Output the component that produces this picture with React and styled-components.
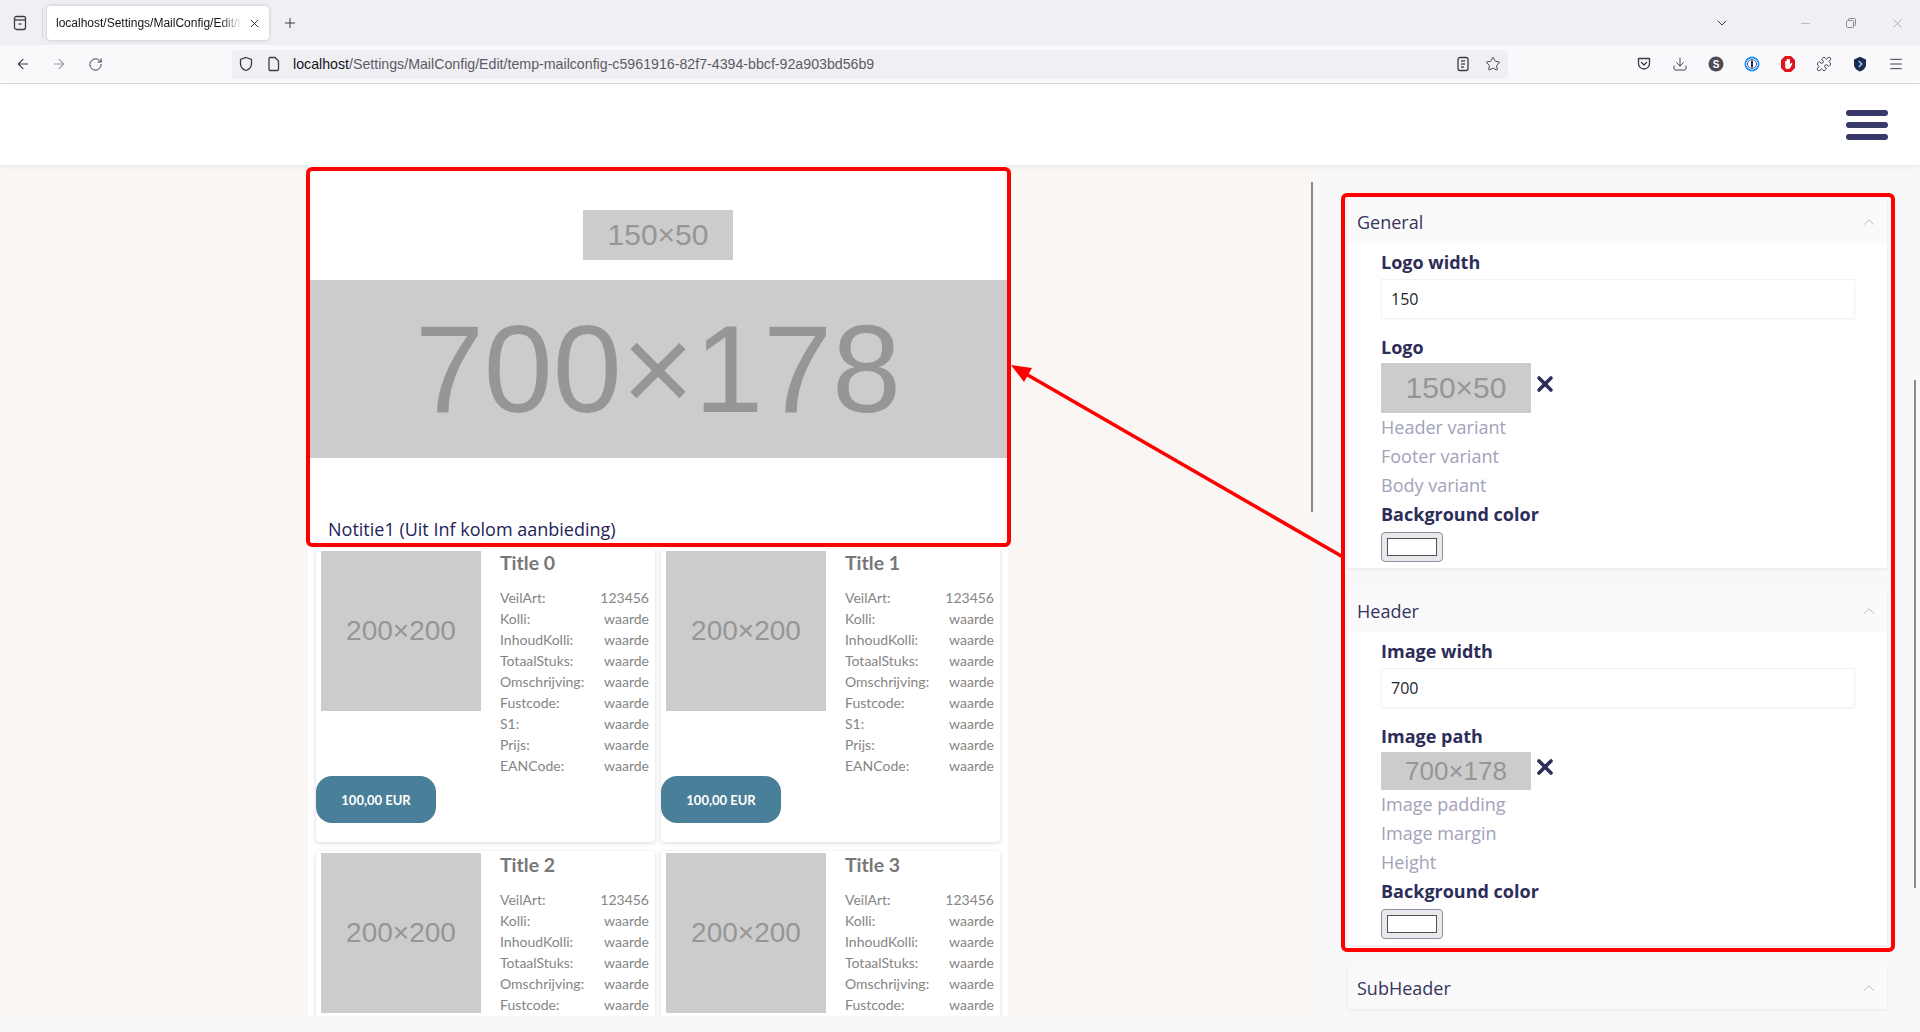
import React from "react";
import styled, { createGlobalStyle } from "styled-components";
import {
  ArrowLeft,
  ArrowRight,
  RotateCw,
  Plus,
  ChevronDown,
  ChevronUp,
  Minus,
  X,
  Star,
  Download,
  Puzzle,
  Menu,
} from "lucide-react";

const GlobalStyle = createGlobalStyle`
  html, body {
    margin: 0;
    padding: 0;
    overflow: hidden;
    background: #f8f8fa;
  }
  * {
    box-sizing: border-box;
  }
`;

const UI = `"Liberation Sans", Arial, sans-serif`;
const OPEN = `"Open Sans", "Noto Sans", sans-serif`;
const CARD = `Lato, "Open Sans", sans-serif`;
const PLACE = `"Liberation Sans", Arial, sans-serif`;

const rows = [
  ["VeilArt:", "123456"],
  ["Kolli:", "waarde"],
  ["InhoudKolli:", "waarde"],
  ["TotaalStuks:", "waarde"],
  ["Omschrijving:", "waarde"],
  ["Fustcode:", "waarde"],
  ["S1:", "waarde"],
  ["Prijs:", "waarde"],
  ["EANCode:", "waarde"],
];

/* ---------- browser chrome ---------- */

const TabStrip = styled.div`
  height: 45px;
  background: #f0f0f4;
  display: flex;
  align-items: center;
  padding-top: 1px;
  font-family: ${UI};
  color: #15141a;
`;

const IconBtn = styled.div`
  width: ${(p) => p.$w || 36}px;
  height: 32px;
  display: flex;
  align-items: center;
  justify-content: center;
  flex-shrink: 0;
  margin-left: ${(p) => p.$ml || 0}px;
  color: ${(p) => p.$color || "#3b3b45"};
`;

const Sep = styled.div`
  width: 1px;
  height: 30px;
  background: #d8d8de;
  margin: 0 2px 0 2px;
`;

const Tab = styled.div`
  width: 222px;
  height: 34px;
  margin-left: 2px;
  background: #fff;
  border-radius: 4px;
  box-shadow: 0 0 4px rgba(0, 0, 0, 0.18);
  display: flex;
  align-items: center;
  padding: 0 8px 0 9px;
  font-size: 12px;
  gap: 6px;
`;

const TabTitle = styled.span`
  flex: 1;
  white-space: nowrap;
  overflow: hidden;
  -webkit-mask-image: linear-gradient(to right, #000 88%, transparent);
`;

const Spacer = styled.div`
  flex: 1;
`;

const NavBar = styled.div`
  height: 39px;
  background: #f9f9fb;
  border-bottom: 1px solid #dcdce0;
  display: flex;
  align-items: center;
  padding: 0 6px 0 5px;
  font-family: ${UI};
`;

const UrlBar = styled.div`
  margin-left: 119px;
  width: 1276px;
  height: 29px;
  background: #f0f0f4;
  border-radius: 4px;
  display: flex;
  align-items: center;
  padding: 0 0 0 6px;
  font-size: 14.2px;
  color: #5b5b66;
`;

const UrlText = styled.span`
  margin-left: 5px;
  flex: 1;
  white-space: nowrap;
  b {
    font-weight: 400;
    color: #15141a;
  }
`;

/* ---------- page ---------- */

const Page = styled.div`
  height: 948px;
  display: flex;
  flex-direction: column;
`;

const TopHeader = styled.header`
  height: 81px;
  background: #fff;
  display: flex;
  align-items: center;
  justify-content: flex-end;
  padding-right: 32px;
  box-shadow: 0 2px 5px rgba(0, 0, 0, 0.05);
  position: relative;
  z-index: 2;
`;

const Burger = styled.div`
  width: 42px;
  display: flex;
  flex-direction: column;
  gap: 6px;
  span {
    height: 6px;
    border-radius: 3px;
    background: #38386a;
  }
`;

const Main = styled.div`
  flex: 1;
  display: flex;
  min-height: 0;
`;

const PreviewPane = styled.div`
  width: 1316px;
  height: 851px;
  background: #f9f6f3;
  overflow: hidden;
  position: relative;
`;

const PaneThumb = styled.div`
  position: absolute;
  right: ${(p) => p.$right}px;
  top: ${(p) => p.$top}px;
  height: ${(p) => p.$h}px;
  width: 2px;
  background: #8a8a8a;
`;

const Email = styled.div`
  width: 700px;
  margin: 0 auto;
  background: #fff;
  padding-top: 45px;
`;

const Placeholder = styled.div`
  width: ${(p) => p.$w}px;
  height: ${(p) => p.$h}px;
  background: #cccccc;
  color: #969696;
  font-family: ${PLACE};
  font-size: ${(p) => p.$fs}px;
  display: flex;
  align-items: center;
  justify-content: center;
  flex-shrink: 0;
  margin: ${(p) => (p.$center ? "0 auto" : "0")};
`;

const LogoWrap = styled.div`
  margin-bottom: 20px;
`;

const Note = styled.p`
  margin: 0;
  padding: 59px 20px 8px;
  font-family: ${OPEN};
  font-size: 18px;
  line-height: 24px;
  color: #23235a;
`;

const CardGrid = styled.div`
  display: grid;
  grid-template-columns: 1fr 1fr;
  gap: 9px 6px;
  padding: 0 8px 0 8px;
`;

const Card = styled.div`
  background: #fff;
  border-radius: 4px;
  box-shadow: 0 1px 4px rgba(0, 0, 0, 0.16);
  padding: 2px 0 19px 0;
  font-family: ${CARD};
`;

const CardTop = styled.div`
  display: flex;
  padding: 0 6px 0 5px;
`;

const CardInfo = styled.div`
  flex: 1;
  margin-left: 19px;
`;

const CardTitle = styled.h3`
  margin: 1px 0 13px;
  font-size: 19.5px;
  line-height: 22px;
  font-weight: 700;
  color: #777;
`;

const InfoGrid = styled.div`
  display: grid;
  grid-template-columns: auto auto;
  justify-content: space-between;
  font-size: 14px;
  line-height: 21px;
  color: #858585;
  span:nth-child(even) {
    text-align: right;
  }
`;

const PriceButton = styled.div`
  width: 120px;
  height: 47px;
  border-radius: 16px;
  background: #4a7f99;
  color: #fff;
  font-weight: 700;
  font-size: 13px;
  display: flex;
  align-items: center;
  justify-content: center;
`;

/* ---------- settings ---------- */

const SettingsPane = styled.div`
  flex: 1;
  padding: 35px 33px 0 32px;
  position: relative;
  font-family: ${OPEN};
`;

const Section = styled.section`
  background: #fff;
  box-shadow: 0 1px 3px rgba(0, 0, 0, 0.07);
  margin-bottom: 21px;
`;

const SectionHead = styled.div`
  height: 43px;
  background: #fafafa;
  display: flex;
  align-items: center;
  justify-content: space-between;
  padding: 0 9px 0 9px;
  font-size: 18px;
  color: #34345f;
`;

const SectionBody = styled.div`
  padding: 5px 32px 6px 33px;
`;

const Field = styled.div`
  margin-bottom: ${(p) => (p.$mb === undefined ? 14 : p.$mb)}px;
`;

const Label = styled.div`
  font-size: 18px;
  line-height: 29px;
  font-weight: 700;
  color: #2d2d5a;
  margin-bottom: ${(p) => p.$mb || 0}px;
`;

const TextInput = styled.input`
  display: block;
  width: 100%;
  height: 40px;
  border: 1px solid #f2f2f4;
  box-shadow: 0 1px 2px rgba(0, 0, 0, 0.03);
  background: #fff;
  padding: 0 9px;
  font-family: ${OPEN};
  font-size: 16px;
  color: #1e1e2e;
  outline: none;
`;

const ImageRow = styled.div`
  display: flex;
  align-items: center;
  gap: 2px;
  margin-top: 1px;
  svg {
    margin-bottom: 8px;
  }
`;

const Variant = styled.div`
  font-size: 18px;
  line-height: 29px;
  color: #a2a2b9;
`;

const ColorSwatch = styled.div`
  width: 62px;
  height: 30px;
  margin-top: 3px;
  border: 1px solid #8f8f9d;
  border-radius: 4px;
  background: #e9e9ed;
  padding: 5px 5px;
  div {
    height: 100%;
    background: #fff;
    border: 1px solid #505050;
  }
`;

const Overlay = styled.svg`
  position: absolute;
  left: 0;
  top: 0;
  pointer-events: none;
  z-index: 10;
`;

/* ---------- small drawn icons ---------- */

const ViewIcon = () => (
  <svg width="16" height="16" viewBox="0 0 16 16" fill="none" stroke="#3b3b45" strokeWidth="1.3">
    <rect x="2.5" y="1.5" width="11" height="13" rx="2" />
    <line x1="2.5" y1="5" x2="13.5" y2="5" />
    <line x1="6.5" y1="9" x2="9.5" y2="9" />
  </svg>
);

const RestoreIcon = () => (
  <svg width="12" height="12" viewBox="0 0 12 12" fill="none" stroke="#8a8a8a" strokeWidth="1">
    <rect x="1.5" y="3.5" width="7" height="7" rx="1" />
    <path d="M3.5 3.5V2.5a1 1 0 0 1 1-1h5a1 1 0 0 1 1 1v5a1 1 0 0 1-1 1h-1" />
  </svg>
);

const ShieldIcon = () => (
  <svg width="16" height="16" viewBox="0 0 16 16" fill="none" stroke="#3b3b45" strokeWidth="1.3">
    <path d="M8 1.5l5.5 2v4c0 3.5-2.5 6-5.5 7-3-1-5.5-3.5-5.5-7v-4z" />
  </svg>
);

const PageIcon = () => (
  <svg width="16" height="16" viewBox="0 0 16 16" fill="none" stroke="#3b3b45" strokeWidth="1.3">
    <path d="M4 1.5h5l3.5 3.5v8.5a1 1 0 0 1-1 1h-7.5a1 1 0 0 1-1-1v-11a1 1 0 0 1 1-1z" />
  </svg>
);

const ReaderIcon = () => (
  <svg width="16" height="16" viewBox="0 0 16 16" fill="none" stroke="#3b3b45" strokeWidth="1.3">
    <rect x="3" y="1.5" width="10" height="13" rx="2" />
    <line x1="6" y1="5" x2="10" y2="5" />
    <line x1="6" y1="8" x2="10" y2="8" />
    <line x1="6" y1="11" x2="9" y2="11" />
  </svg>
);

const PocketIcon = () => (
  <svg width="16" height="16" viewBox="0 0 16 16" fill="none" stroke="#3b3b45" strokeWidth="1.3">
    <path d="M2.5 2.5h11v5a5.5 5.5 0 0 1-11 0z" strokeLinejoin="round" />
    <path d="M5.5 6.5L8 9l2.5-2.5" strokeLinecap="round" />
  </svg>
);

const SIcon = () => (
  <svg width="16" height="16" viewBox="0 0 16 16">
    <circle cx="8" cy="8" r="7.5" fill="#4b4b52" />
    <text x="8" y="11.5" textAnchor="middle" fontSize="10" fontWeight="700" fill="#fff" fontFamily="Liberation Sans, sans-serif">
      S
    </text>
  </svg>
);

const OnePassIcon = () => (
  <svg width="16" height="16" viewBox="0 0 16 16">
    <circle cx="8" cy="8" r="7.5" fill="#1a8cff" />
    <circle cx="8" cy="8" r="5.8" fill="#fff" />
    <circle cx="8" cy="8" r="4.5" fill="none" stroke="#1a285f" strokeWidth="0.8" />
    <rect x="7" y="4.5" width="2" height="7" rx="0.6" fill="#1a285f" />
  </svg>
);

const HandIcon = () => (
  <svg width="16" height="18" viewBox="0 0 16 18">
    <path d="M5 1h6l4 4v8l-4 4H5l-4-4V5z" fill="#e0141b" />
    <path d="M5.2 12.5V6.5a.8.8 0 0 1 1.6 0V9V4.5a.8.8 0 0 1 1.6 0V9V4.8a.8.8 0 0 1 1.6 0V9.5l.8-1.3a.8.8 0 0 1 1.4.8l-1.6 3.3c-.5 1-1.3 1.7-2.6 1.7H7.3c-1.3 0-2.1-.8-2.1-1.5z" fill="#fff" />
  </svg>
);

const DarkShield = () => (
  <svg width="16" height="16" viewBox="0 0 16 16">
    <path d="M8 .8l6 2.8v5c0 3.3-2.6 6-6 6.8-3.4-.8-6-3.5-6-6.8v-5z" fill="#172d4d" />
    <path d="M6.8 5l3 3-3 3" fill="none" stroke="#9fd3ff" strokeWidth="1.4" />
  </svg>
);

/* ---------- parts ---------- */

const ProductCard = ({ title }) => (
  <Card>
    <CardTop>
      <Placeholder $w={160} $h={160} $fs={28}>
        200×200
      </Placeholder>
      <CardInfo>
        <CardTitle>{title}</CardTitle>
        <InfoGrid>
          {rows.map(([k, v]) => (
            <React.Fragment key={k}>
              <span>{k}</span>
              <span>{v}</span>
            </React.Fragment>
          ))}
        </InfoGrid>
      </CardInfo>
    </CardTop>
    <PriceButton>100,00 EUR</PriceButton>
  </Card>
);

const Swatch = () => (
  <ColorSwatch>
    <div />
  </ColorSwatch>
);

const RemoveIcon = () => <X size={24} strokeWidth={3.6} color="#2d2d5a" />;

const Chevron = () => <ChevronUp size={18} strokeWidth={1.3} color="#b4b4bd" />;

const App = () => {
  return (
    <>
      <GlobalStyle />
      <TabStrip>
        <IconBtn $w={40}>
          <ViewIcon />
        </IconBtn>
        <Sep />
        <Tab>
          <TabTitle>localhost/Settings/MailConfig/Edit/temp-mailconfig</TabTitle>
          <X size={13} strokeWidth={1.6} />
        </Tab>
        <IconBtn $w={42}>
          <Plus size={16} strokeWidth={1.5} />
        </IconBtn>
        <Spacer />
        <IconBtn $w={40}>
          <ChevronDown size={16} strokeWidth={1.5} />
        </IconBtn>
        <IconBtn $w={40} />
        <IconBtn $w={46} $color="#8a8a8a">
          <Minus size={13} strokeWidth={1} />
        </IconBtn>
        <IconBtn $w={46}>
          <RestoreIcon />
        </IconBtn>
        <IconBtn $w={46} $color="#8a8a8a">
          <X size={15} strokeWidth={1} />
        </IconBtn>
      </TabStrip>

      <NavBar>
        <IconBtn>
          <ArrowLeft size={16} strokeWidth={1.6} />
        </IconBtn>
        <IconBtn $color="#9a9aa2">
          <ArrowRight size={16} strokeWidth={1.6} />
        </IconBtn>
        <IconBtn>
          <RotateCw size={15} strokeWidth={1.6} />
        </IconBtn>
        <UrlBar>
          <IconBtn $w={16}>
            <ShieldIcon />
          </IconBtn>
          <IconBtn $w={28} $ml={6}>
            <PageIcon />
          </IconBtn>
          <UrlText>
            <b>localhost</b>/Settings/MailConfig/Edit/temp-mailconfig-c5961916-82f7-4394-bbcf-92a903bd56b9
          </UrlText>
          <IconBtn $w={30}>
            <ReaderIcon />
          </IconBtn>
          <IconBtn $w={30}>
            <Star size={16} strokeWidth={1.4} />
          </IconBtn>
        </UrlBar>
        <Spacer />
        <IconBtn>
          <PocketIcon />
        </IconBtn>
        <IconBtn>
          <Download size={16} strokeWidth={1.4} />
        </IconBtn>
        <IconBtn>
          <SIcon />
        </IconBtn>
        <IconBtn>
          <OnePassIcon />
        </IconBtn>
        <IconBtn>
          <HandIcon />
        </IconBtn>
        <IconBtn>
          <Puzzle size={16} strokeWidth={1.4} />
        </IconBtn>
        <IconBtn>
          <DarkShield />
        </IconBtn>
        <IconBtn>
          <Menu size={16} strokeWidth={1.5} />
        </IconBtn>
      </NavBar>

      <Page>
        <TopHeader>
          <Burger>
            <span />
            <span />
            <span />
          </Burger>
        </TopHeader>
        <Main>
          <PreviewPane>
            <Email>
              <LogoWrap>
                <Placeholder $w={150} $h={50} $fs={30} $center>
                  150×50
                </Placeholder>
              </LogoWrap>
              <Placeholder $w={700} $h={178} $fs={124}>
                700×178
              </Placeholder>
              <Note>Notitie1 (Uit Inf kolom aanbieding)</Note>
              <CardGrid>
                <ProductCard title="Title 0" />
                <ProductCard title="Title 1" />
                <ProductCard title="Title 2" />
                <ProductCard title="Title 3" />
              </CardGrid>
            </Email>
            <PaneThumb $right={3} $top={17} $h={330} />
          </PreviewPane>

          <SettingsPane>
            <Section>
              <SectionHead>
                General
                <Chevron />
              </SectionHead>
              <SectionBody>
                <Field>
                  <Label $mb={2}>Logo width</Label>
                  <TextInput defaultValue="150" />
                </Field>
                <Field $mb={0}>
                  <Label>Logo</Label>
                  <ImageRow>
                    <Placeholder $w={150} $h={50} $fs={30}>
                      150×50
                    </Placeholder>
                    <RemoveIcon />
                  </ImageRow>
                  <Variant>Header variant</Variant>
                  <Variant>Footer variant</Variant>
                  <Variant>Body variant</Variant>
                </Field>
                <Field $mb={0}>
                  <Label>Background color</Label>
                  <Swatch />
                </Field>
              </SectionBody>
            </Section>

            <Section>
              <SectionHead>
                Header
                <Chevron />
              </SectionHead>
              <SectionBody>
                <Field>
                  <Label $mb={2}>Image width</Label>
                  <TextInput defaultValue="700" />
                </Field>
                <Field $mb={0}>
                  <Label>Image path</Label>
                  <ImageRow>
                    <Placeholder $w={150} $h={38} $fs={26}>
                      700×178
                    </Placeholder>
                    <RemoveIcon />
                  </ImageRow>
                  <Variant>Image padding</Variant>
                  <Variant>Image margin</Variant>
                  <Variant>Height</Variant>
                </Field>
                <Field $mb={0}>
                  <Label>Background color</Label>
                  <Swatch />
                </Field>
              </SectionBody>
            </Section>

            <Section>
              <SectionHead>
                SubHeader
                <Chevron />
              </SectionHead>
            </Section>
            <PaneThumb $right={4} $top={215} $h={508} />
          </SettingsPane>
        </Main>
      </Page>

      <Overlay width="1920" height="1032" viewBox="0 0 1920 1032">
        <rect x="308" y="169" width="701" height="376" rx="4" fill="none" stroke="#ff0000" strokeWidth="4" />
        <rect x="1343" y="195" width="550" height="755" rx="4" fill="none" stroke="#ff0000" strokeWidth="4" />
        <line x1="1343" y1="557" x2="1026" y2="374" stroke="#ff0000" strokeWidth="3.5" />
        <polygon points="1011,365 1032,368 1024,382" fill="#ff0000" />
      </Overlay>
    </>
  );
};

export default App;
